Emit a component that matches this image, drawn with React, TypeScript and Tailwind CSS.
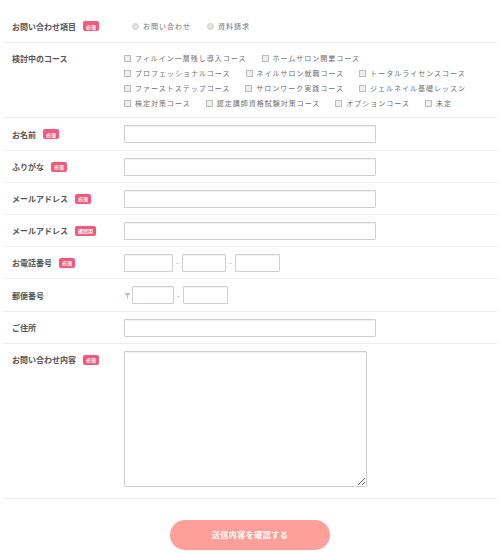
import React from "react";

const FONT = "font-['Noto_Sans_CJK_JP','Noto_Sans',sans-serif]";

function Badge({ text = "必須" }: { text?: string }) {
  return (
    <span className="ml-[7px] inline-flex h-[10px] items-center rounded-[2px] bg-[#f4587d] px-[3px] text-[5px] font-bold leading-none text-white">
      {text}
    </span>
  );
}

function Label({ children, badge, top }: { children: React.ReactNode; badge?: string | boolean; top?: boolean }) {
  return (
    <div
      className={`flex w-[121px] shrink-0 pl-[9px] ${top ? "items-start pt-[8px]" : "items-center"}`}
    >
      <span className="flex items-center text-[8px] font-bold leading-[15px] text-[#555]">
        {children}
        {badge ? <Badge text={typeof badge === "string" ? badge : "必須"} /> : null}
      </span>
    </div>
  );
}

function Check({ label }: { label: string }) {
  return (
    <span className="mr-[15px] inline-flex items-center">
      <span className="mr-[4px] inline-block h-[7px] w-[7px] border border-[#bdbdbd] bg-[#eeeeee]" />
      <span className="text-[7px] tracking-[1px] text-[#6f6f6f]">{label}</span>
    </span>
  );
}

function Radio({ label }: { label: string }) {
  return (
    <span className="mr-[16px] inline-flex items-center">
      <span className="mr-[4px] inline-block h-[7px] w-[7px] rounded-full border border-[#cfcfcf] bg-[#e3e3e3]" />
      <span className="text-[7px] tracking-[1px] text-[#6f6f6f]">{label}</span>
    </span>
  );
}

function Input({ w }: { w: string }) {
  return (
    <input
      type="text"
      className={`${w} h-[18px] rounded-[1px] border border-[#cfcfcf] bg-white shadow-[inset_0_1px_1px_rgba(0,0,0,0.06)] outline-none`}
    />
  );
}

function Dash() {
  return <span className="w-[9px] text-center text-[7px] text-[#888]">-</span>;
}

export default function App() {
  const lines = [
    ["フィルイン一層残し導入コース", "ホームサロン開業コース"],
    ["プロフェッショナルコース", "ネイルサロン就職コース", "トータルライセンスコース"],
    ["ファーストステップコース", "サロンワーク実践コース", "ジェルネイル基礎レッスン"],
    ["検定対策コース", "認定講師資格試験対策コース", "オプションコース", "未定"],
  ];
  const row = "flex border-b border-[#ececec]";
  return (
    <div className={`h-[554px] w-[500px] overflow-hidden bg-white ${FONT}`}>
      <div className="px-[3px] pt-[10px]">
        <div className={`${row} h-[33px]`}>
          <Label badge>お問い合わせ項目</Label>
          <div className="flex items-center pl-[8px]">
            <Radio label="お問い合わせ" />
            <Radio label="資料請求" />
          </div>
        </div>

        <div className={`${row} h-[75px]`}>
          <Label top>検討中のコース</Label>
          <div className="flex flex-col pt-[8px]">
            {lines.map((l, i) => (
              <div key={i} className="flex h-[15px] items-center">
                {l.map((c) => (
                  <Check key={c} label={c} />
                ))}
              </div>
            ))}
          </div>
        </div>

        <div className={`${row} h-[33px]`}>
          <Label badge>お名前</Label>
          <div className="flex items-center">
            <Input w="w-[252px]" />
          </div>
        </div>

        <div className={`${row} h-[32px]`}>
          <Label badge>ふりがな</Label>
          <div className="flex items-center">
            <Input w="w-[252px]" />
          </div>
        </div>

        <div className={`${row} h-[32px]`}>
          <Label badge>メールアドレス</Label>
          <div className="flex items-center">
            <Input w="w-[252px]" />
          </div>
        </div>

        <div className={`${row} h-[32px]`}>
          <Label badge="確認用">メールアドレス</Label>
          <div className="flex items-center">
            <Input w="w-[252px]" />
          </div>
        </div>

        <div className={`${row} h-[32px]`}>
          <Label badge>お電話番号</Label>
          <div className="flex items-center">
            <Input w="w-[49px]" />
            <Dash />
            <Input w="w-[44px]" />
            <Dash />
            <Input w="w-[45px]" />
          </div>
        </div>

        <div className={`${row} h-[33px]`}>
          <Label>郵便番号</Label>
          <div className="flex items-center">
            <span className="w-[8px] text-[7px] text-[#888]">〒</span>
            <Input w="w-[42px]" />
            <Dash />
            <Input w="w-[45px]" />
          </div>
        </div>

        <div className={`${row} h-[32px]`}>
          <Label>ご住所</Label>
          <div className="flex items-center">
            <Input w="w-[252px]" />
          </div>
        </div>

        <div className={`${row} h-[155px]`}>
          <Label badge top>お問い合わせ内容</Label>
          <div className="pt-[7px]">
            <textarea className="block h-[136px] w-[243px] rounded-[1px] border border-[#cfcfcf] bg-white shadow-[inset_0_1px_1px_rgba(0,0,0,0.06)] outline-none" />
          </div>
        </div>
      </div>

      <div className="flex justify-center pt-[21px]">
        <button className="flex h-[30px] w-[160px] items-center justify-center rounded-full bg-[#ff9f99] text-[8px] font-bold tracking-[0.5px] text-white">
          送信内容を確認する
        </button>
      </div>
    </div>
  );
}
